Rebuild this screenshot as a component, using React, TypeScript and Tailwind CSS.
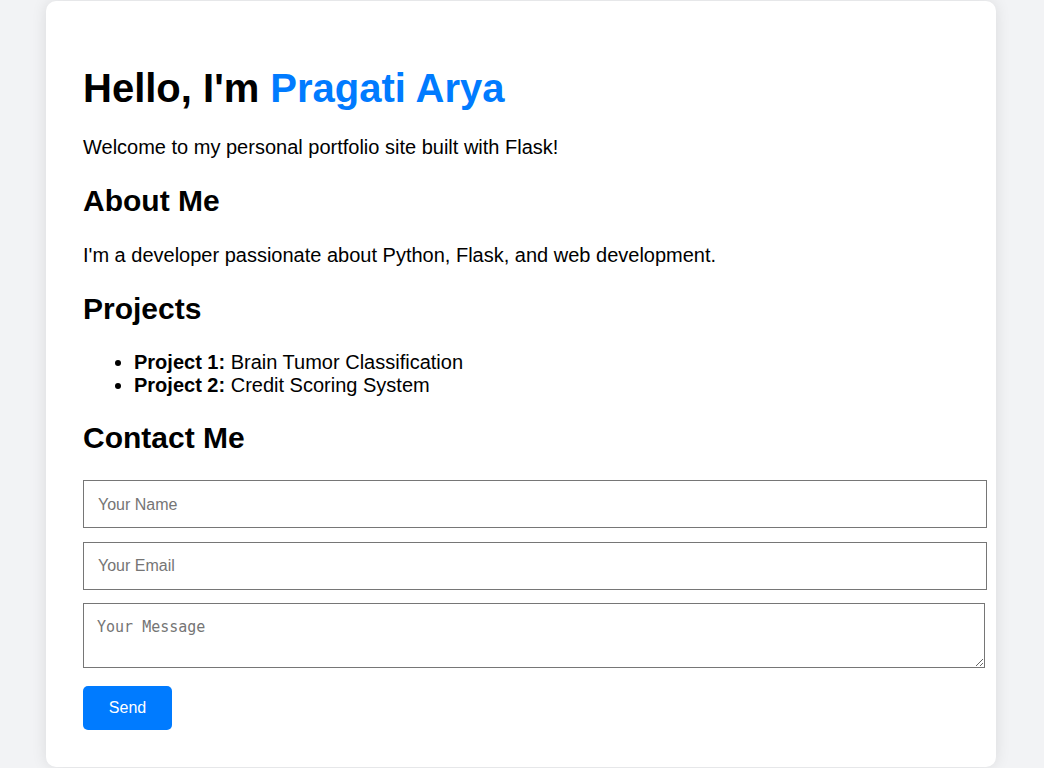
import React from "react";

export default function App() {
  return (
    <div
      className="min-h-[768px] bg-[#f2f3f5] pt-px"
      style={{ fontFamily: '"Liberation Sans", Arial, sans-serif' }}
    >
      <div className="mx-auto w-[950px] rounded-[10px] bg-white px-[37px] pt-[37px] pb-[37px] text-black shadow-[0_0_15px_rgba(0,0,0,0.1)] -translate-x-px">
        <h1 className="mt-[27px] text-[40px] font-bold leading-[46px]">
          Hello, I'm <span className="text-[#007bff]">Pragati Arya</span>
        </h1>
        <p className="mt-[25px] text-[20px] leading-[23px]">
          Welcome to my personal portfolio site built with Flask!
        </p>
        <h2 className="mt-[25px] text-[30px] font-bold leading-[34.5px]">About Me</h2>
        <p className="mt-[25px] text-[20px] leading-[23px]">
          I'm a developer passionate about Python, Flask, and web development.
        </p>
        <h2 className="mt-[25px] text-[30px] font-bold leading-[34.5px]">Projects</h2>
        <ul className="mt-[25px] list-disc pl-[51px] text-[20px] leading-[23px]">
          <li>
            <strong>Project 1:</strong> Brain Tumor Classification
          </li>
          <li>
            <strong>Project 2:</strong> Credit Scoring System
          </li>
        </ul>
        <h2 className="mt-[24px] text-[30px] font-bold leading-[34.5px]">Contact Me</h2>
        <form className="mt-[24px] flex flex-col items-start" onSubmit={(e) => e.preventDefault()}>
          <input
            type="text"
            placeholder="Your Name"
            className="box-border h-[48px] w-[904px] border border-[#767676] bg-white px-[14px] pt-[2px] text-[16px] leading-[18px] outline-none placeholder:text-[#757575]"
          />
          <input
            type="email"
            placeholder="Your Email"
            className="mt-[14px] box-border h-[48px] w-[904px] border border-[#767676] bg-white px-[14px] pt-[1px] text-[16px] leading-[18px] outline-none placeholder:text-[#757575]"
          />
          <textarea
            placeholder="Your Message"
            className="mt-[13px] box-border h-[65px] w-[902px] resize-y border border-[#767676] bg-white px-[13px] pt-[15px] pb-[13px] text-[15px] leading-[17px] outline-none placeholder:text-[#757575]"
            style={{ fontFamily: '"DejaVu Sans Mono", monospace' }}
          />
          <button
            type="submit"
            className="mt-[18px] h-[44px] w-[89px] rounded-[5px] bg-[#007bff] text-[16px] text-white"
          >
            Send
          </button>
        </form>
      </div>
    </div>
  );
}
